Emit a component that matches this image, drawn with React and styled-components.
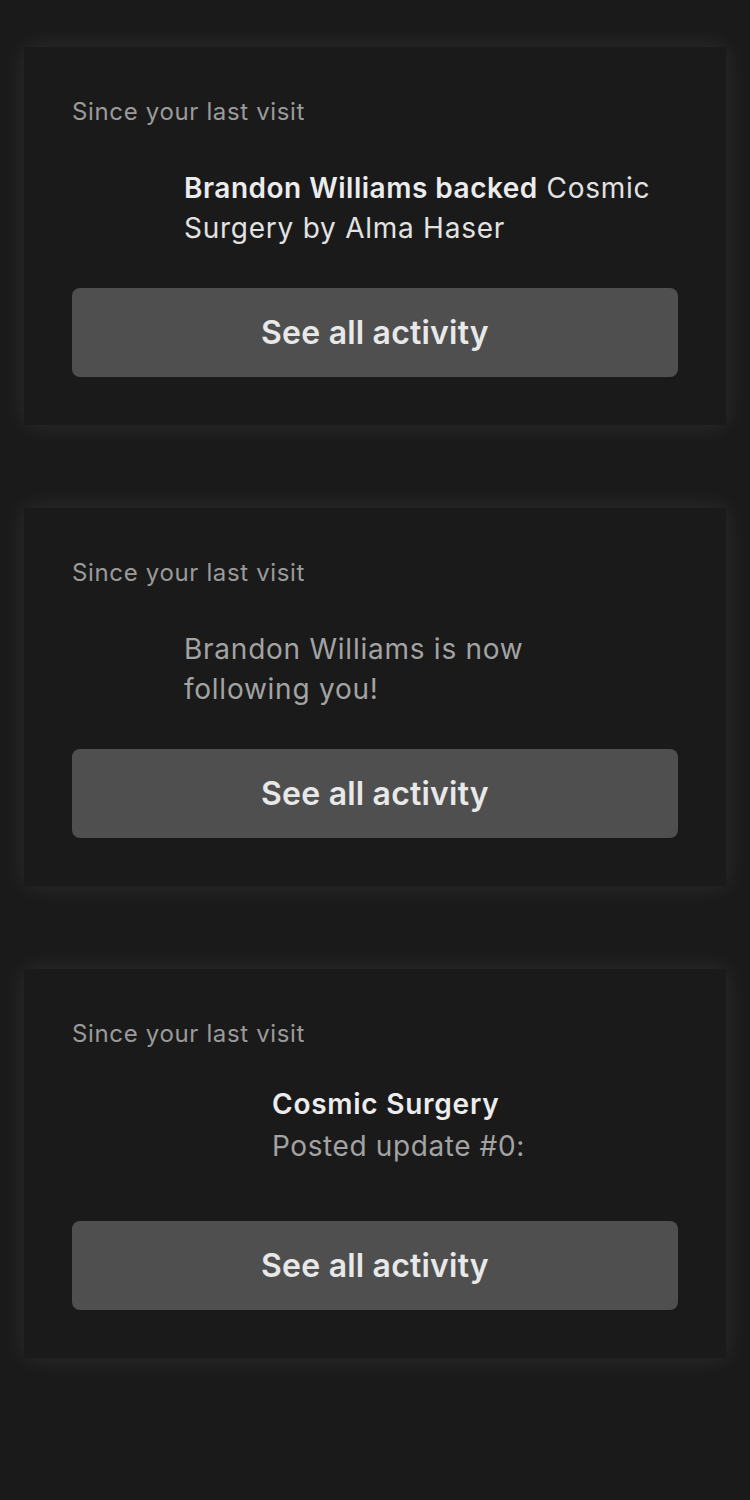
import React from "react";
import styled, { createGlobalStyle } from "styled-components";

const Global = createGlobalStyle`
  html, body { margin: 0; padding: 0; background: #1a1a1a; }
  body { font-family: Inter, "Noto Sans", sans-serif; -webkit-font-smoothing: antialiased; }
`;

const Page = styled.div`
  background: #1a1a1a;
  min-height: 1500px;
  padding: 47px 24px 0;
  box-sizing: border-box;
  display: flex;
  flex-direction: column;
  gap: 83px;
`;

const Card = styled.section`
  background: #1a1a1a;
  box-shadow: 0 0 24px rgba(255, 255, 255, 0.085);
  padding: 51px 48px 48px;
  display: flex;
  flex-direction: column;
`;

const Label = styled.div`
  font-size: 24px;
  line-height: 28px;
  color: #9a9a9a;
  letter-spacing: 0.65px;
`;

const Row = styled.div`
  display: flex;
  margin-top: 42px;
  min-height: ${(p) => p.$min || 0}px;
`;

const Thumb = styled.div`
  flex: none;
  width: ${(p) => p.$w}px;
`;

const Body = styled.p`
  margin: 0;
  font-size: 28px;
  line-height: 40px;
  color: ${(p) => (p.$muted ? "#a3a3a3" : "#e2e2e2")};
  letter-spacing: 0.75px;
  max-width: ${(p) => p.$maxW || 486}px;
`;

const Strong = styled.strong`
  font-weight: 600;
  color: #ececec;
  letter-spacing: 0.5px;
`;

const TextCol = styled.div`
  display: flex;
  flex-direction: column;
  gap: 8px;
`;

const Title = styled.div`
  font-size: 28px;
  line-height: 28px;
  font-weight: 600;
  color: #ececec;
  letter-spacing: 0.75px;
`;

const Sub = styled.div`
  font-size: 28px;
  line-height: 40px;
  color: #a3a3a3;
  letter-spacing: 0.6px;
`;

const Button = styled.button`
  margin-top: 40px;
  height: 89px;
  width: 100%;
  border: none;
  border-radius: 8px;
  background: #4f4f4f;
  color: #e8e8e8;
  font-family: inherit;
  font-size: 32px;
  font-weight: 600;
  letter-spacing: 0.2px;
  cursor: pointer;
`;

export default function App() {
  return (
    <>
      <Global />
      <Page>
        <Card>
          <Label>Since your last visit</Label>
          <Row>
            <Thumb $w={112} />
            <Body>
              <Strong>Brandon Williams backed</Strong> Cosmic Surgery by Alma Haser
            </Body>
          </Row>
          <Button>See all activity</Button>
        </Card>
        <Card>
          <Label>Since your last visit</Label>
          <Row>
            <Thumb $w={112} />
            <Body $muted $maxW={440}>Brandon Williams is now following you!</Body>
          </Row>
          <Button>See all activity</Button>
        </Card>
        <Card>
          <Label>Since your last visit</Label>
          <Row $min={91}>
            <Thumb $w={200} />
            <TextCol>
              <Title>Cosmic Surgery</Title>
              <Sub>Posted update #0:</Sub>
            </TextCol>
          </Row>
          <Button>See all activity</Button>
        </Card>
      </Page>
    </>
  );
}
